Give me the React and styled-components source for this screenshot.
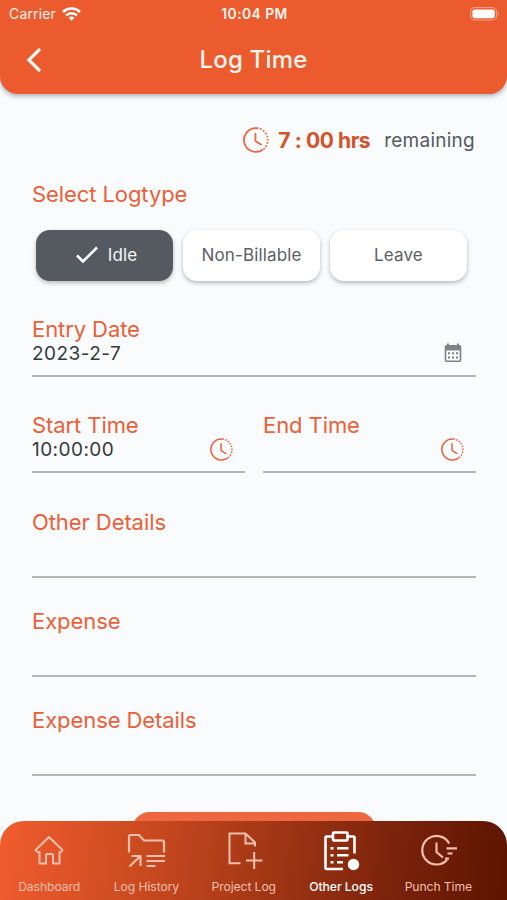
import React from 'react'
import styled, { createGlobalStyle } from 'styled-components'

const GlobalStyle = createGlobalStyle`
  :root {
    --orange: #ec5b2d;
    --slate: #545a5f;
    --bg: #fafbfd;
    --line: #b4b5b8;
  }
  * {
    box-sizing: border-box;
  }
  body {
    margin: 0;
    background-color: var(--bg);
    font-family: Inter, 'Liberation Sans', sans-serif;
  }
  button {
    font-family: inherit;
    border: 0;
    padding: 0;
    background: none;
  }
  svg {
    display: block;
    flex: none;
  }
`

const StyledScreen = styled.div`
  display: flex;
  flex-direction: column;
  width: 100%;
  height: 900px;
  overflow: hidden;
  background-color: var(--bg);
`

const StyledHeader = styled.header`
  flex: none;
  height: 94px;
  color: #fff5ef;
  background-color: var(--orange);
  border-radius: 0 0 18px 18px;
  box-shadow: 0 2px 5px rgba(60, 80, 90, 0.45);
`

const StyledStatusBar = styled.div`
  display: grid;
  grid-template-columns: 1fr auto 1fr;
  align-items: center;
  height: 27px;
  padding: 0 7px 0 9px;
  font-size: 14px;
  .carrier {
    display: flex;
    align-items: center;
    gap: 6px;
    letter-spacing: 0.15px;
  }
  .clock {
    font-weight: 600;
    font-size: 13.8px;
    letter-spacing: 0.45px;
  }
  .battery {
    justify-self: end;
  }
`

const StyledTitleBar = styled.div`
  display: grid;
  grid-template-columns: 60px 1fr 60px;
  align-items: center;
  height: 66px;
  .back {
    padding-left: 26px;
    color: inherit;
  }
  h1 {
    margin: 0;
    text-align: center;
    font-size: 24px;
    line-height: 30px;
    font-weight: 500;
    letter-spacing: 0.2px;
  }
`

const StyledMain = styled.main`
  flex: 1;
  min-height: 0;
  padding: 32px 31px 0 32px;
`

const StyledRemaining = styled.div`
  display: flex;
  align-items: center;
  justify-content: flex-end;
  height: 28px;
  margin-bottom: 28px;
  padding-right: 1px;
  color: var(--slate);
  font-size: 19px;
  letter-spacing: 0.25px;
  strong {
    margin: 0 14px 0 9px;
    color: #d4522a;
    font-size: 21px;
    font-weight: 700;
    letter-spacing: -0.4px;
  }
`

const StyledLabel = styled.div`
  height: 24px;
  line-height: 24px;
  font-size: 22px;
  letter-spacing: -0.08px;
  color: #ea6038;
  white-space: nowrap;
`

const StyledLogTypes = styled.div`
  display: flex;
  gap: 10px;
  margin: 24px 0 36px;
  padding-left: 4px;
`

const StyledLogType = styled.button`
  display: flex;
  align-items: center;
  justify-content: center;
  gap: 10px;
  width: 137px;
  height: 51px;
  padding: 0 0 2px ${({ $active }) => ($active ? '4px' : '0')};
  border-radius: 14px;
  font-size: 17px;
  letter-spacing: 0.15px;
  color: ${({ $active }) => ($active ? '#f6f7f8' : '#5c6063')};
  background-color: ${({ $active }) => ($active ? 'var(--slate)' : '#fff')};
  box-shadow: 0 2px 4px rgba(50, 60, 70, 0.35);
`

const StyledForm = styled.div`
  display: flex;
  flex-direction: column;
`

const StyledRow = styled.div`
  display: grid;
  grid-template-columns: 213px 213px;
  justify-content: space-between;
  margin: 36px 0 37px;
`

const StyledField = styled.div`
  height: ${({ $tall }) => ($tall ? '68px' : '60px')};
  margin-bottom: ${({ $tall }) => ($tall ? '31px' : '0')};
  border-bottom: 2px solid var(--line);
  .value {
    display: flex;
    align-items: center;
    justify-content: space-between;
    height: 24px;
    padding-right: 12px;
    font-size: 19px;
    letter-spacing: 0.45px;
    color: #35383b;
  }
`

const StyledSubmit = styled.button`
  display: block;
  width: 244px;
  height: 50px;
  margin: 5px auto 0;
  border-radius: 18px;
  background-color: #ef6740;
`

const StyledNav = styled.nav`
  position: relative;
  flex: none;
  display: grid;
  grid-template-columns: repeat(5, 97.3px);
  height: 79px;
  border-radius: 24px 24px 0 0;
  background: linear-gradient(97deg, #ee5b2d 2%, #c8491f 30%, #9d3413 56%, #7a220b 78%, #5c1400 100%);
`

const StyledNavItem = styled.a`
  display: flex;
  flex-direction: column;
  align-items: center;
  padding: 8px 0 0 1px;
  color: ${({ $active }) => ($active ? '#fff' : '#f3bfae')};
  font-size: 12.2px;
  line-height: 16px;
  letter-spacing: ${({ $active }) => ($active ? '-0.05px' : '-0.1px')};
  white-space: nowrap;
  font-weight: ${({ $active }) => ($active ? 500 : 400)};
  svg {
    margin-bottom: 6px;
  }
`

// solid left arc, dotted right side
const ClockIcon = ({ size = 24 }) => (
  <svg width={size} height={size} viewBox="0 0 24 24" fill="none" stroke="#e8643f" strokeWidth="1.6">
    <path d="M13 1.050A11 11 0 1 0 18.500 20.800" />
    <path d="M13 1.050A11 11 0 0 1 18.500 20.800" strokeDasharray="1.5 1.5" />
    <path d="M11.500 6v7l5 3.200" strokeLinecap="round" strokeLinejoin="round" />
  </svg>
)

const CalendarIcon = () => (
  <svg width="18" height="20" viewBox="0 0 18 20" style={{ marginRight: 2 }}>
    <path
      fill="#808184"
      fillRule="evenodd"
      d="M3 .5h2V2h8V.5h2V2h.5A1.8 1.8 0 0 1 17.300 3.800V17.200A1.800 1.800 0 0 1 15.500 19H2.500A1.800 1.800 0 0 1 .7 17.200V3.800A1.800 1.800 0 0 1 2.500 2H3zM2.300 7.500V17.400H15.700V7.500z"
    />
    <path stroke="#808184" strokeWidth="2" strokeDasharray="2 2" d="M4 10.300h10M4 14.400h10" />
  </svg>
)

const WifiIcon = () => (
  <svg width="19" height="14" viewBox="0 0 19 14" fill="none" stroke="#fff" strokeWidth="2.5">
    <path d="M1 5a12.300 12.300 0 0 1 17 0" />
    <path d="M4 8.400a8 8 0 0 1 11 0" />
    <path d="M6.500 10.800a4.500 4.500 0 0 1 6 0L9.500 13.800z" fill="#fff" stroke="none" />
  </svg>
)

const BatteryIcon = () => (
  <svg className="battery" width="30" height="14" viewBox="0 0 30 14" fill="none">
    <rect x="0.600" y="0.600" width="26" height="12.400" rx="3.800" stroke="#fff" strokeOpacity=".45" />
    <rect x="2.400" y="2.400" width="22.400" height="8.800" rx="2.200" fill="#fff" />
    <path d="M28 4.700a2.500 2.500 0 0 1 0 4z" fill="#fff" fillOpacity=".5" />
  </svg>
)

const HomeIcon = () => (
  <svg width="44" height="44" viewBox="0 0 44 44" fill="none" stroke="currentColor" strokeWidth="2" strokeLinejoin="round">
    <path d="M22 8L35.500 21L34 23H32.500V34.500H26V26.500a1.500 1.500 0 0 0-1.500-1.500h-4A1.500 1.500 0 0 0 19 26.500v8H12.500V23H10.500L8.500 21z" />
  </svg>
)

const HistoryIcon = () => (
  <svg width="44" height="44" viewBox="0 0 44 44" fill="none" stroke="currentColor" strokeWidth="2.200">
    <path d="M5 23.500V7.500a1.500 1.500 0 0 1 1.500-1.500H15l5 5.500h18.500a1.500 1.500 0 0 1 1.500 1.500V23.500" />
    <path d="M5.500 37.500L16 27.500M7.500 27h9v10" />
    <path d="M22.500 27H41M22.500 32H41M22.500 37H31.500" />
  </svg>
)

const ProjectIcon = () => (
  <svg width="44" height="44" viewBox="0 0 44 44" fill="none" stroke="currentColor" strokeWidth="2">
    <path d="M18.500 34.300H7.500V4.500H23.500L33 13.500V17.500M23.500 4.500V14.500H33" />
    <path d="M24 31.500h16.500M32.200 23v17" />
  </svg>
)

const ClipboardIcon = () => (
  <svg width="44" height="44" viewBox="0 0 44 44" fill="none" stroke="currentColor" strokeWidth="2.600">
    <path d="M13.500 7.500H7.500a1 1 0 0 0-1 1v30.500a1 1 0 0 0 1 1H24M28.500 7.500h6a1 1 0 0 1 1 1v16" />
    <rect x="14" y="3.500" width="14.500" height="8" rx="1" />
    <path d="M11.500 19.200h3M18 19.200h11.500M11.500 26.200h3M18 26.200h11.500M11.500 33.200h3M18 33.200h6" />
    <circle cx="34.500" cy="35.500" r="5.700" fill="currentColor" stroke="none" />
  </svg>
)

const PunchIcon = () => (
  <svg width="44" height="44" viewBox="0 0 44 44" fill="none" stroke="currentColor" strokeWidth="2.200">
    <path d="M33.200 14.500A14.300 14.300 0 1 0 31 31" />
    <path d="M20.500 13.500v9.500l6.500 5.500" />
    <path d="M30.500 19.300h10.500M31.500 24.500h5M29 29.600h4" />
  </svg>
)

const logTypes = ['Idle', 'Non-Billable', 'Leave']

const tabs = [
  { name: 'Dashboard', Icon: HomeIcon },
  { name: 'Log History', Icon: HistoryIcon },
  { name: 'Project Log', Icon: ProjectIcon },
  { name: 'Other Logs', Icon: ClipboardIcon },
  { name: 'Punch Time', Icon: PunchIcon },
]

const Field = ({ label, value, icon, tall }) => (
  <StyledField $tall={tall}>
    <StyledLabel>{label}</StyledLabel>
    {!tall && (
      <div className="value">
        <span>{value}</span>
        {icon}
      </div>
    )}
  </StyledField>
)

// markup
const App = () => {
  const selected = 'Idle'

  return (
    <StyledScreen>
      <GlobalStyle />
      <StyledHeader>
        <StyledStatusBar>
          <div className="carrier">
            Carrier
            <WifiIcon />
          </div>
          <div className="clock">10:04 PM</div>
          <BatteryIcon />
        </StyledStatusBar>
        <StyledTitleBar>
          <button className="back" aria-label="Back">
            <svg width="16" height="26" viewBox="0 0 16 26" fill="none" stroke="currentColor" strokeWidth="3.200">
              <path d="M14 2L2.800 13L14 24" />
            </svg>
          </button>
          <h1>Log Time</h1>
        </StyledTitleBar>
      </StyledHeader>

      <StyledMain>
        <StyledRemaining>
          <ClockIcon size={26} />
          <strong>7 : 00 hrs</strong>
          <span>remaining</span>
        </StyledRemaining>
        <StyledLabel>Select Logtype</StyledLabel>
        <StyledLogTypes>
          {logTypes.map((type) => (
            <StyledLogType key={type} $active={type === selected}>
              {type === selected && (
                <svg width="22" height="18" viewBox="0 0 22 18" fill="none" stroke="#fff" strokeWidth="2.600">
                  <path d="M1 9.500L7 15.500L21 1.500" />
                </svg>
              )}
              {type}
            </StyledLogType>
          ))}
        </StyledLogTypes>
        <StyledForm>
          <Field label="Entry Date" value="2023-2-7" icon={<CalendarIcon />} />
          <StyledRow>
            <Field label="Start Time" value="10:00:00" icon={<ClockIcon size={23} />} />
            <Field label="End Time" value="" icon={<ClockIcon size={23} />} />
          </StyledRow>
          <Field tall label="Other Details" />
          <Field tall label="Expense" />
          <Field tall label="Expense Details" />
          <StyledSubmit aria-label="Submit" />
        </StyledForm>
      </StyledMain>

      <StyledNav>
        {tabs.map(({ name, Icon }) => (
          <StyledNavItem key={name} $active={name === 'Other Logs'}>
            <Icon />
            {name}
          </StyledNavItem>
        ))}
      </StyledNav>
    </StyledScreen>
  )
}

export default App
